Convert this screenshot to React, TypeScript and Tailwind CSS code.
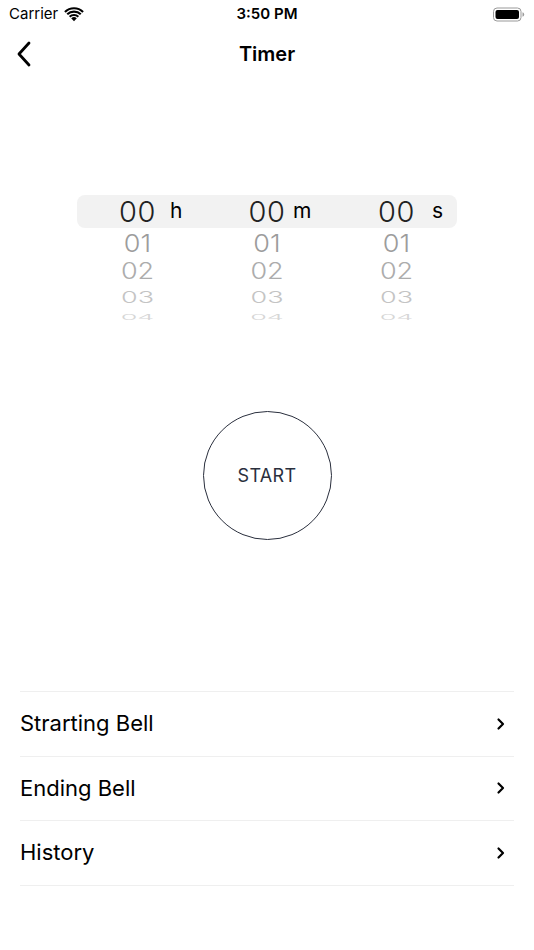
import React from "react";

const font = { fontFamily: "Inter, 'Noto Sans', 'Liberation Sans', sans-serif" };

function Wifi() {
  return (
    <svg width="20" height="15" viewBox="0 0 20 15" className="ml-[6px]">
      <path d="M10 14.2 L7.2 11.3 A4 4 0 0 1 12.8 11.3 Z" fill="#000" />
      <path d="M4.9 9 A7.3 7.3 0 0 1 15.1 9 L13.6 10.5 A5.2 5.2 0 0 0 6.4 10.5 Z" fill="#000" />
      <path d="M2.5 6.6 A10.7 10.7 0 0 1 17.5 6.6 L16 8.1 A8.6 8.6 0 0 0 4 8.1 Z" fill="#000" />
      <path d="M0.2 4.2 A14 14 0 0 1 19.8 4.2 L18.3 5.7 A12 12 0 0 0 1.7 5.7 Z" fill="#000" />
    </svg>
  );
}

function Battery() {
  return (
    <svg width="32" height="15" viewBox="0 0 32 15">
      <rect x="0.5" y="1" width="27.5" height="13" rx="3.5" fill="none" stroke="#999" strokeWidth="1" />
      <rect x="2.5" y="3" width="23.5" height="9" rx="2" fill="#000" />
      <path d="M29.5 5.2 Q31.2 5.6 31.2 7.5 Q31.2 9.4 29.5 9.8 Z" fill="#999" />
    </svg>
  );
}

function Chevron() {
  return (
    <svg width="10" height="14" viewBox="0 0 10 14">
      <path d="M2.5 2.5 L7 7 L2.5 11.5" fill="none" stroke="#000" strokeWidth="2.2" strokeLinecap="round" strokeLinejoin="round" />
    </svg>
  );
}

const cols = [
  { label: "h", left: "left-[93px]" },
  { label: "m", left: "left-[95px]" },
  { label: "s", left: "left-[96px]" },
];

const fadeRows = [
  { n: "01", h: "h-[30px]", c: "text-[#9c9c9c]", t: "scale-y-[0.92]" },
  { n: "02", h: "h-[26px]", c: "text-[#acacac]", t: "scale-y-[0.82]" },
  { n: "03", h: "h-[20px]", c: "text-[#c4c4c4]", t: "scale-y-[0.6]" },
  { n: "04", h: "h-[12px]", c: "text-[#d6d6d6]", t: "scale-y-[0.3]" },
];

export default function App() {
  return (
    <div className="w-[534px] h-[950px] bg-white flex flex-col overflow-hidden" style={font}>
      {/* status bar */}
      <div className="h-[28px] flex items-center px-[9px] relative">
        <div className="flex items-center flex-1">
          <span className="text-[15px] text-black">Carrier</span>
          <Wifi />
        </div>
        <span className="text-[15px] font-semibold text-black">3:50 PM</span>
        <div className="flex-1 flex justify-end">
          <Battery />
        </div>
      </div>
      {/* nav bar */}
      <div className="h-[52px] flex items-center relative">
        <div className="w-[60px] pl-[15px] flex items-center">
          <svg width="18" height="26" viewBox="0 0 18 26">
            <path d="M14 2 L4 13 L14 24" fill="none" stroke="#000" strokeWidth="2.8" strokeLinecap="round" strokeLinejoin="round" />
          </svg>
        </div>
        <div className="flex-1 text-center text-[20px] font-semibold text-black">Timer</div>
        <div className="w-[60px]" />
      </div>

      {/* picker */}
      <div className="mt-[115px] flex justify-center">
        <div className="w-[380px] flex flex-col">
          <div className="h-[33px] rounded-[8px] bg-[#f2f2f2] grid grid-cols-[121px_138px_121px] items-center">
            {cols.map((c) => (
              <div key={c.label} className="relative flex justify-center items-center h-full">
                <span className="text-[29px] font-light text-[#222] leading-none tracking-[0.5px]">00</span>
                <span className={`absolute ${c.left} top-[4px] text-[21px] text-black leading-[24px]`}>{c.label}</span>
              </div>
            ))}
          </div>
          <div className="flex flex-col">
            {fadeRows.map((r) => (
              <div key={r.n} className={`${r.h} shrink-0 grid grid-cols-[121px_138px_121px] items-center`}>
                {cols.map((c) => (
                  <div key={c.label} className="flex justify-center items-center h-full">
                    <span className={`inline-block text-[27px] font-light leading-[27px] ${r.c} ${r.t}`}>{r.n}</span>
                  </div>
                ))}
              </div>
            ))}
          </div>
        </div>
      </div>

      {/* start button */}
      <div className="mt-[95px] flex justify-center">
        <div className="w-[129px] h-[129px] rounded-full border-[1.5px] border-[#2a2f3d] flex items-center justify-center">
          <span className="text-[18px] text-[#2a2f3d] tracking-[0.3px]">START</span>
        </div>
      </div>

      {/* list */}
      <div className="mt-[151px] mx-[20px] border-t border-[#efefef]">
        {["Strarting Bell", "Ending Bell", "History"].map((t) => (
          <div key={t} className="h-[64.5px] flex items-center justify-between border-b border-[#efefef] pr-[8px]">
            <span className="text-[22px] text-black">{t}</span>
            <Chevron />
          </div>
        ))}
      </div>
    </div>
  );
}
